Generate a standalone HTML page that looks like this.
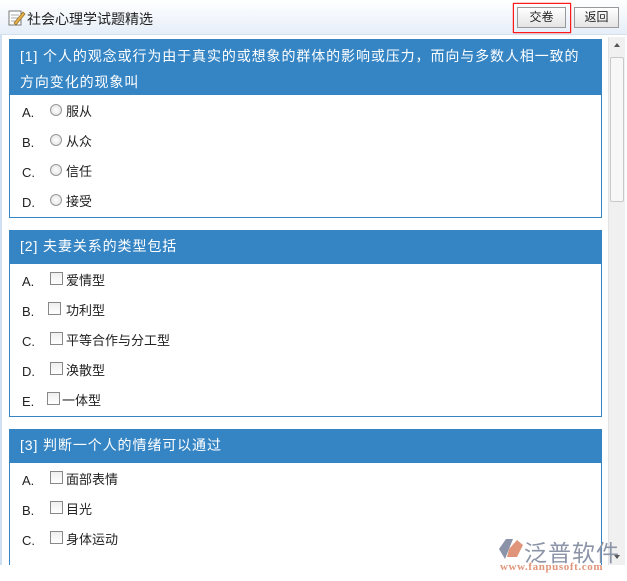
<!DOCTYPE html>
<html><head><meta charset="utf-8"><style>
*{margin:0;padding:0;box-sizing:border-box}
body{width:627px;height:581px;overflow:hidden;background:#fff;font-family:"Liberation Sans","Noto Sans CJK SC",sans-serif;font-size:13px;color:#222;position:relative}
.top{position:absolute;left:0;top:0;width:627px;height:35px;background:linear-gradient(#fff,#e6eef8);border-bottom:1px solid #d5e0ee}
.title{position:absolute;left:27px;top:9px;font-size:14px;color:#222}
.btn{position:absolute;top:7px;height:21px;border:1px solid #999;background:linear-gradient(#fff,#e4e4e4);font-size:12px;text-align:center;line-height:19px}
.frame{position:absolute;left:0;top:35px;width:627px;height:530px;border-left:2px solid #cfe0f2;overflow:hidden}
.q{position:absolute;left:9px;width:593px;border:1px solid #3585c5;background:#fff}
.qh{background:#3585c5;color:#fff;font-size:14px;letter-spacing:0.9px;padding:0 8px 0 10px;line-height:26px}
.opt{position:relative;height:30px;font-size:13px}
.opt .l{position:absolute;left:12px;top:10px}
.opt .r{position:absolute;left:40px;top:9px;width:12px;height:12px;border-radius:50%;border:1px solid #999;background:radial-gradient(#fff,#ddd)}
.opt .c{position:absolute;left:40px;top:8px;width:13px;height:13px;border:1px solid #888;background:linear-gradient(#eee,#fff)}
.opt .t{position:absolute;left:56px;top:6px}
.sb{position:absolute;left:608px;top:37px;width:17px;height:528px;background:#f0f0f0;border-left:1px solid #e3e3e3}
.thumb{position:absolute;left:1px;top:20px;width:14px;height:145px;background:#f7f7f7;border:1px solid #c8c8c8;border-radius:2px}
</style></head><body>
<div class="top">
<svg style="position:absolute;left:8px;top:9px" width="18" height="18" viewBox="0 0 18 18"><rect x="1" y="2" width="12" height="14" fill="#fff" stroke="#777"/><line x1="3" y1="6" x2="11" y2="6" stroke="#aaa"/><line x1="3" y1="9" x2="11" y2="9" stroke="#aaa"/><line x1="3" y1="12" x2="9" y2="12" stroke="#aaa"/><path d="M6 14 L15 3 L17 5 L8 16 Z" fill="#e8b04a" stroke="#8a6a20" stroke-width=".7"/></svg>
<div class="title">社会心理学试题精选</div>
<div style="position:absolute;left:513px;top:3px;width:58px;height:30px;border:1px solid #ff1a1a;box-shadow:0 0 1px #f00"></div>
<div class="btn" style="left:517px;width:49px">交卷</div>
<div class="btn" style="left:574px;width:45px">返回</div>
</div>
<div class="frame"></div>
<div class="q" style="top:39px;height:179px">
<div class="qh" style="padding-top:3px;height:55px">[1] 个人的观念或行为由于真实的或想象的群体的影响或压力，而向与多数人相一致的方向变化的现象叫</div>
<div class="opt"><span class="l">A.</span><span class="r"></span><span class="t">服从</span></div>
<div class="opt"><span class="l">B.</span><span class="r"></span><span class="t">从众</span></div>
<div class="opt"><span class="l">C.</span><span class="r"></span><span class="t">信任</span></div>
<div class="opt"><span class="l">D.</span><span class="r"></span><span class="t">接受</span></div>
</div>
<div class="q" style="top:230px;height:187px">
<div class="qh" style="height:33px;line-height:31px">[2] 夫妻关系的类型包括</div>
<div class="opt"><span class="l">A.</span><span class="c"></span><span class="t">爱情型</span></div>
<div class="opt"><span class="l">B.</span><span class="c" style="left:38px"></span><span class="t">功利型</span></div>
<div class="opt"><span class="l">C.</span><span class="c"></span><span class="t">平等合作与分工型</span></div>
<div class="opt"><span class="l">D.</span><span class="c"></span><span class="t">涣散型</span></div>
<div class="opt"><span class="l">E.</span><span class="c" style="left:37px"></span><span class="t" style="left:52px">一体型</span></div>
</div>
<div class="q" style="top:429px;height:145px;border-bottom:none">
<div class="qh" style="height:33px;line-height:31px">[3] 判断一个人的情绪可以通过</div>
<div class="opt"><span class="l">A.</span><span class="c"></span><span class="t">面部表情</span></div>
<div class="opt"><span class="l">B.</span><span class="c"></span><span class="t">目光</span></div>
<div class="opt"><span class="l">C.</span><span class="c"></span><span class="t">身体运动</span></div>
</div>
<div style="position:absolute;left:0;top:565px;width:627px;height:16px;background:#fff"></div>
<div class="sb"><div style="position:absolute;left:5px;top:6px;border:3px solid transparent;border-bottom:4px solid #555;border-top:none"></div><div class="thumb"></div><div style="position:absolute;left:5px;top:518px;border:3px solid transparent;border-top:4px solid #555;border-bottom:none"></div></div>
<svg style="position:absolute;left:497px;top:537px" width="28" height="24" viewBox="0 0 28 24"><path d="M2 12 L9 2 L16 2 L8 22 Z" fill="#8a93a8"/><path d="M12 12 L20 3 L26 8 L20 20 L10 20 Z" fill="#e0957a"/></svg>
<div style="position:absolute;left:524px;top:534px;font-size:23px;color:#8c94a8;letter-spacing:1px">泛普软件</div>
<div style="position:absolute;left:500px;top:561px;font-size:11px;color:#e0957a;font-family:'Liberation Serif',serif;font-weight:bold;letter-spacing:0.6px">www.fanpusoft.com</div>
</body></html>
